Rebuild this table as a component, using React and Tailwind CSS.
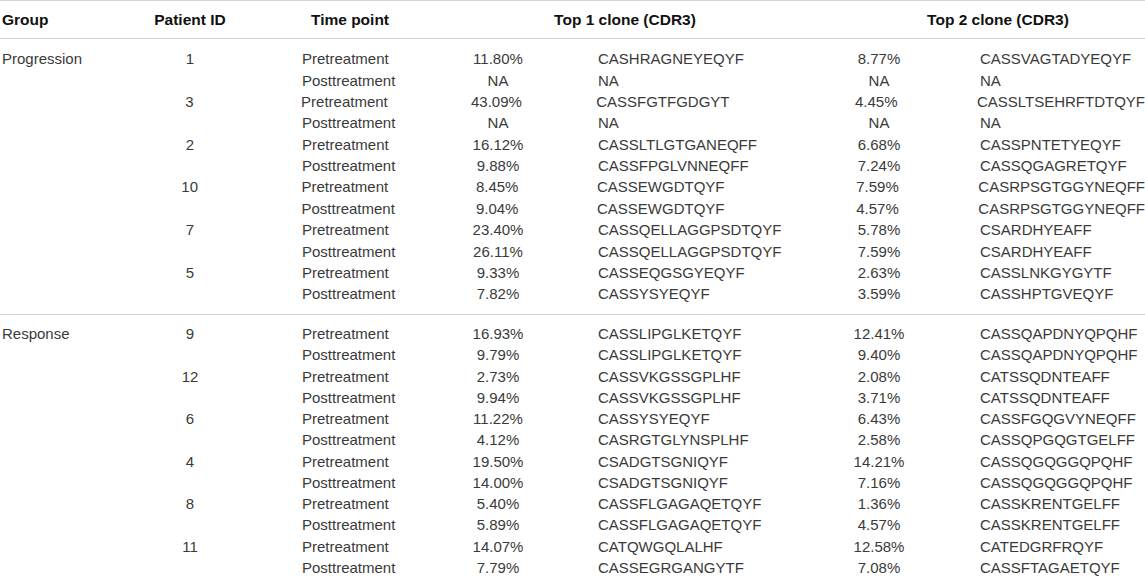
import React from "react";

const progression = [
  ["1", "Pretreatment", "11.80%", "CASHRAGNEYEQYF", "8.77%", "CASSVAGTADYEQYF"],
  ["", "Posttreatment", "NA", "NA", "NA", "NA"],
  ["3", "Pretreatment", "43.09%", "CASSFGTFGDGYT", "4.45%", "CASSLTSEHRFTDTQYF"],
  ["", "Posttreatment", "NA", "NA", "NA", "NA"],
  ["2", "Pretreatment", "16.12%", "CASSLTLGTGANEQFF", "6.68%", "CASSPNTETYEQYF"],
  ["", "Posttreatment", "9.88%", "CASSFPGLVNNEQFF", "7.24%", "CASSQGAGRETQYF"],
  ["10", "Pretreatment", "8.45%", "CASSEWGDTQYF", "7.59%", "CASRPSGTGGYNEQFF"],
  ["", "Posttreatment", "9.04%", "CASSEWGDTQYF", "4.57%", "CASRPSGTGGYNEQFF"],
  ["7", "Pretreatment", "23.40%", "CASSQELLAGGPSDTQYF", "5.78%", "CSARDHYEAFF"],
  ["", "Posttreatment", "26.11%", "CASSQELLAGGPSDTQYF", "7.59%", "CSARDHYEAFF"],
  ["5", "Pretreatment", "9.33%", "CASSEQGSGYEQYF", "2.63%", "CASSLNKGYGYTF"],
  ["", "Posttreatment", "7.82%", "CASSYSYEQYF", "3.59%", "CASSHPTGVEQYF"],
];

const response = [
  ["9", "Pretreatment", "16.93%", "CASSLIPGLKETQYF", "12.41%", "CASSQAPDNYQPQHF"],
  ["", "Posttreatment", "9.79%", "CASSLIPGLKETQYF", "9.40%", "CASSQAPDNYQPQHF"],
  ["12", "Pretreatment", "2.73%", "CASSVKGSSGPLHF", "2.08%", "CATSSQDNTEAFF"],
  ["", "Posttreatment", "9.94%", "CASSVKGSSGPLHF", "3.71%", "CATSSQDNTEAFF"],
  ["6", "Pretreatment", "11.22%", "CASSYSYEQYF", "6.43%", "CASSFGQGVYNEQFF"],
  ["", "Posttreatment", "4.12%", "CASRGTGLYNSPLHF", "2.58%", "CASSQPGQGTGELFF"],
  ["4", "Pretreatment", "19.50%", "CSADGTSGNIQYF", "14.21%", "CASSQGQGGQPQHF"],
  ["", "Posttreatment", "14.00%", "CSADGTSGNIQYF", "7.16%", "CASSQGQGGQPQHF"],
  ["8", "Pretreatment", "5.40%", "CASSFLGAGAQETQYF", "1.36%", "CASSKRENTGELFF"],
  ["", "Posttreatment", "5.89%", "CASSFLGAGAQETQYF", "4.57%", "CASSKRENTGELFF"],
  ["11", "Pretreatment", "14.07%", "CATQWGQLALHF", "12.58%", "CATEDGRFRQYF"],
  ["", "Posttreatment", "7.79%", "CASSEGRGANGYTF", "7.08%", "CASSFTAGAETQYF"],
];

function Row({ group, r, h }) {
  return (
    <div className={`flex items-center ${h}`}>
      <div className="w-[140px] pl-[2px]">{group}</div>
      <div className="w-[100px] text-center">{r[0]}</div>
      <div className="w-[62px]" />
      <div className="w-[138px]">{r[1]}</div>
      <div className="w-[116px] text-center">{r[2]}</div>
      <div className="w-[42px]" />
      <div className="w-[222px]">{r[3]}</div>
      <div className="w-[118px] text-center">{r[4]}</div>
      <div className="w-[42px]" />
      <div className="flex-1">{r[5]}</div>
    </div>
  );
}

export default function App() {
  return (
    <div className="w-[1145px] h-[577px] overflow-hidden bg-white text-[15px] text-[#3a3a3a] font-['Liberation_Sans',Arial,sans-serif] whitespace-nowrap">
      <div className="border-t border-[#d4d4d4]" />
      {/* header */}
      <div className="flex h-[38px] items-center border-b border-[#d4d4d4] font-bold text-[#111] text-[15.5px]">
        <div className="w-[140px] pl-[2px]">Group</div>
        <div className="w-[100px] text-center">Patient ID</div>
        <div className="w-[62px]" />
        <div className="w-[96px] text-center">Time point</div>
        <div className="w-[42px]" />
        <div className="w-[370px] text-center">Top 1 clone (CDR3)</div>
        <div className="w-[41px]" />
        <div className="w-[294px] text-center">Top 2 clone (CDR3)</div>
      </div>
      {/* progression */}
      <div className="pt-[10px] pb-[9px] border-b border-[#d4d4d4]">
        {progression.map((r, i) => (
          <Row key={i} h="h-[21.35px]" group={i === 0 ? "Progression" : ""} r={r} />
        ))}
      </div>
      {/* response */}
      <div className="pt-[8.5px]">
        {response.map((r, i) => (
          <Row key={i} h="h-[21.27px]" group={i === 0 ? "Response" : ""} r={r} />
        ))}
      </div>
    </div>
  );
}
